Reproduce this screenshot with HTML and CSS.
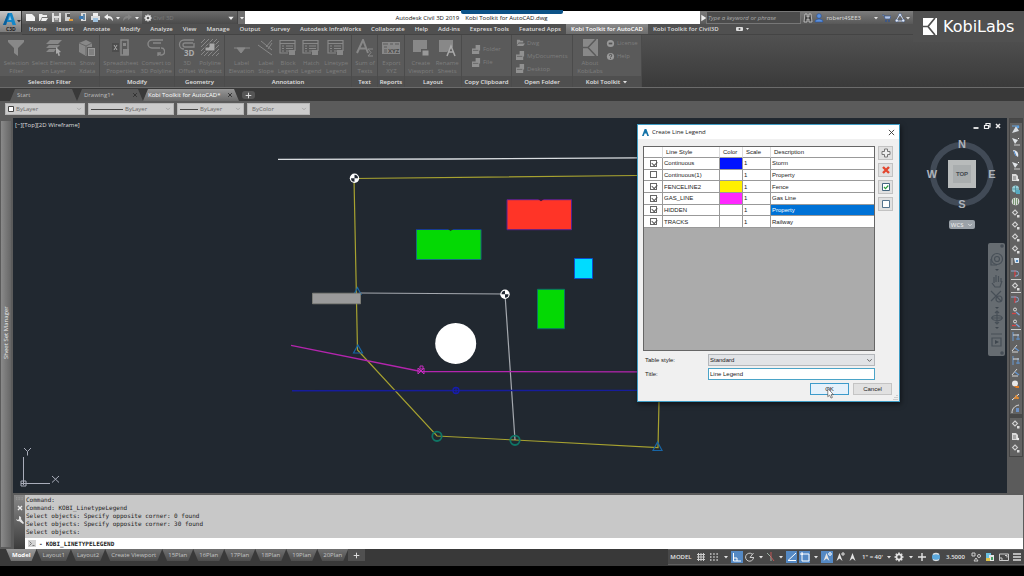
FILE: index.html
```html
<!DOCTYPE html>
<html lang="en">
<head>
<meta charset="utf-8">
<title>Autodesk Civil 3D 2019 - Kobi Toolkit for AutoCAD.dwg</title>
<link rel="stylesheet" href="styles.css">
</head>
<body>
<svg class="defs" aria-hidden="true">
  <symbol id="caret" viewBox="0 0 6 6"><path d="M1 2h4L3 4.500z" fill="currentColor"/></symbol>
  <symbol id="chev" viewBox="0 0 8 8"><path d="M1.500 2.500L4 5l2.500-2.500" fill="none" stroke="currentColor"/></symbol>
  <symbol id="x" viewBox="0 0 8 8"><path d="M1.500 1.500l5 5m0-5l-5 5" fill="none" stroke="currentColor" stroke-width="1.300"/></symbol>
  <symbol id="plus" viewBox="0 0 10 10"><path d="M5 1v8M1 5h8" fill="none" stroke="currentColor" stroke-width="1.400"/></symbol>
  <symbol id="gear" viewBox="0 0 10 10"><circle cx="5" cy="5" r="2.600" fill="none" stroke="currentColor" stroke-width="1.800"/><path d="M5 .5v1.500M5 8v1.500M.5 5H2M8 5h1.500M1.800 1.800l1 1M7.200 7.200l1 1M1.800 8.200l1-1M7.200 2.800l1-1" stroke="currentColor" stroke-width="1.600"/></symbol>
  <symbol id="tb-sel" viewBox="0 0 9 9"><path d="M1 8L5 1l3 5z" fill="#d8dde2"/><path d="M1 1h7" stroke="#67a3dd"/><circle cx="7" cy="2" r="1.300" fill="#5b9fe0"/></symbol>
  <symbol id="tb-flag" viewBox="0 0 9 9"><path d="M1 1l3 6 3-4z" fill="#e0e4e8"/><path d="M3 8h6" stroke="#ccc"/><path d="M7 1l1 1" stroke="#eee"/></symbol>
  <symbol id="tb-shape" viewBox="0 0 9 9"><path d="M2 1c4 0 6 3 5 7L4 6z" fill="#e4e8ee"/><path d="M3 2l2 5" stroke="#4d8ad0"/></symbol>
  <symbol id="tb-page" viewBox="0 0 9 9"><path d="M1 1h4l2 2v5H1z" fill="#dadada"/><path d="M2 4h3M2 6h3" stroke="#777"/><circle cx="7" cy="7" r="1.200" fill="#eee"/></symbol>
  <symbol id="tb-globe" viewBox="0 0 9 9"><circle cx="4.500" cy="4" r="3.500" fill="#9cd0d8"/><path d="M1 4h7M4.500 1v7" stroke="#398191" stroke-width=".7"/><path d="M5 5h4v4H5z" fill="#58a8bf"/></symbol>
  <symbol id="tb-ball" viewBox="0 0 9 9"><circle cx="4.500" cy="4.500" r="3.800" fill="#ddd"/><path d="M4.500 1v7M2.500 1.500v6M6.500 1.500v6" stroke="#6b8d64" stroke-width=".9"/></symbol>
  <symbol id="tb-node" viewBox="0 0 9 9"><path d="M4 1l2.500 2.500L4 6 1.500 3.500z" fill="none" stroke="#d0d0d0" stroke-width="1.100"/><path d="M6 6h2.500v2.500H6z" fill="#ddd"/></symbol>
  <symbol id="tb-tag" viewBox="0 0 9 9"><path d="M1 1v7" stroke="#ccc"/><path d="M3 1h5v5H4z" fill="#dae5ef"/><path d="M5 3h2v2H5z" fill="#4f8dc8"/></symbol>
  <symbol id="tb-red" viewBox="0 0 9 9"><path d="M4 1v7" stroke="#e5383b" stroke-width="1.200"/><path d="M0 2h5a2 2 0 010 5H4" fill="none" stroke="#8ba7ce"/></symbol>
  <symbol id="tb-pair" viewBox="0 0 9 9"><circle cx="4" cy="2.500" r="1.500" fill="none" stroke="#ddd"/><path d="M1 6.500h4" stroke="#d54545" stroke-width="1.300"/><path d="M5 5l3.500 3" stroke="#7fa7d8" stroke-width="1.300"/></symbol>
  <symbol id="tb-dim" viewBox="0 0 9 9"><path d="M2 0v9M7 2v6" stroke="#6b9ad2"/><path d="M2 3h6" stroke="#ddd"/><path d="M5 7h4" stroke="#5d8fc8"/></symbol>
  <symbol id="tb-angle" viewBox="0 0 9 9"><path d="M1 7l5-6M1 8h6" fill="none" stroke="#d6d6d6"/><path d="M4 4l4 3" stroke="#6294d0" stroke-width="1.300"/></symbol>
  <symbol id="tb-orange" viewBox="0 0 9 9"><circle cx="4" cy="3.500" r="3" fill="#e8e8e8"/><path d="M3 6h5v2H5z" fill="#df7c25"/></symbol>
  <symbol id="tb-link" viewBox="0 0 9 9"><path d="M1 8l7-6" stroke="#eee"/><path d="M3 6h5M5 3l2 4" stroke="#e58a2e" stroke-width="1.500"/></symbol>
  <symbol id="tb-curve" viewBox="0 0 9 9"><path d="M1 9C1 5 3 2 8 1" fill="none" stroke="#ddd"/><path d="M5 4h3v4H5z" fill="#6a8fc4"/></symbol>
  <symbol id="legend" viewBox="0 0 18 18"><path d="M1 1.500h15v10.500M1 1v13h8M1 4.500h15M3 7h2m2 0h7M3 9.500h2m2 0h7M3 12h2m2 0h3" fill="none" stroke="currentColor" stroke-width="1.200"/><path d="M10 11h6v5h-6z" fill="currentColor"/></symbol>
  <symbol id="folder" viewBox="0 0 10 10"><path d="M1 2h3l1 1h3v2H3L1 8zM3 6h7L8 9H1z" fill="currentColor"/></symbol>
  <symbol id="docs" viewBox="0 0 10 10"><path d="M4 0h5v6H4zM0 4h5v1h3v5H0z" fill="currentColor"/><path d="M1 6h6" stroke="#5b5b5b" stroke-width=".8"/></symbol>
  <symbol id="ann" viewBox="0 0 10 10"><path d="M4.500 1L1.500 9 4.500 6.500 7.500 9z" fill="currentColor"/></symbol>
</svg>

<div class="app">
<header class="header">
  <button class="appbtn" aria-label="Application menu">
    <svg viewBox="0 0 21 21" width="21" height="21"><path d="M3 14L8 2h4l4 12h-3.500l-1-3H7l-1 3z" fill="#1487c8"/><path d="M8.500 9L10 4.500 11.500 9z" fill="#8ac5e6"/><path d="M3 14L8 2l1 1-3 11z" fill="#0b5f9a"/><path d="M17 9h4l-2 2.500z" fill="#333"/><text x="6" y="20" font-size="5" font-weight="700" fill="#222">C3D</text></svg>
  </button>
  <div class="titlebar">
    <div class="quick">
      <button aria-label="New"><svg viewBox="0 0 9 9"><path d="M0 1h6l3 3v4H0z" fill="#f4f4f4"/></svg></button>
      <button aria-label="Open"><svg viewBox="0 0 9 9"><path d="M0 1h3l1 1h4v2H3L1 8H0zM3 5h6L7 8H2z" fill="#eee"/></svg></button>
      <button aria-label="Save"><svg viewBox="0 0 9 9"><path d="M0 0h9v9H0z" fill="#ddd"/><path d="M2 0h5v3H2zM2 5h5v4H2z" fill="#888"/><path d="M3 6h3" stroke="#eee"/></svg></button>
      <button aria-label="Save as"><svg viewBox="0 0 9 9"><path d="M0 0h5v8H0z" fill="#ccc"/><path d="M2 1h3v3H2z" fill="#555"/><path d="M4 6h4v2H4z" fill="#dd9a3c"/></svg></button>
      <button aria-label="Web open"><svg viewBox="0 0 9 9"><path d="M3 0h5v8H3z" fill="#dcdcdc"/><path d="M1 3h4v3H1z" fill="#3979b5"/><path d="M5 1h2v6H5z" fill="#6387a5"/></svg></button>
      <button aria-label="Plot"><svg viewBox="0 0 9 9"><path d="M2 0h5v3H2z" fill="#eee"/><path d="M0 3h9v4H0z" fill="#ddd"/><path d="M2 5h5v4H2z" fill="#9fc1dd"/></svg></button>
      <button aria-label="Undo"><svg viewBox="0 0 9 9"><path d="M0 4l4-3v2q5 0 5 5Q7 5 4 5v2z" fill="#eee"/></svg></button>
      <button class="tiny" aria-label="Undo list"><svg><use href="#caret"/></svg></button>
      <button class="dim" aria-label="Redo"><svg viewBox="0 0 9 9"><path d="M9 4L5 1v2Q0 3 0 8q2-3 5-3v2z" fill="currentColor"/></svg></button>
      <button class="tiny" aria-label="Redo list"><svg><use href="#caret"/></svg></button>
    </div>
    <label class="workspace"><svg><use href="#gear"/></svg><select aria-label="Workspace"><option>Civil 3D</option></select><svg class="cr"><use href="#caret"/></svg></label>
    <button class="qmore" aria-label="Customize"><svg><use href="#caret"/></svg></button>
    <div class="wintitle"><span>Autodesk Civil 3D 2019</span><span>Kobi Toolkit for AutoCAD.dwg</span></div>
    <div class="infocenter">
      <button class="play" aria-label="Expand"><svg viewBox="0 0 6 6"><path d="M2 1l3 2-3 2z" fill="#eee"/></svg></button>
      <input aria-label="Search" placeholder="Type a keyword or phrase">
      <button aria-label="Find"><svg viewBox="0 0 10 10"><path d="M2 1h2v3h2V1h2l1 8H6V6H4v3H1z" fill="#444" stroke="#ddd" stroke-width=".7"/></svg></button>
      <button class="user"><svg viewBox="0 0 10 10"><circle cx="5" cy="3" r="2.300" fill="#5d91dc" stroke="#214f9b" stroke-width=".6"/><path d="M1 9q0-3 4-3t4 3z" fill="#5d91dc" stroke="#214f9b" stroke-width=".6"/></svg>robert4SEE3<svg class="cr"><use href="#caret"/></svg></button>
      <button aria-label="App store"><svg viewBox="0 0 10 10"><path d="M1 2h2l1 4h5l1-3H3" fill="#b6c6e4" stroke="#35548d" stroke-width=".7"/><circle cx="5" cy="8" r="1" fill="#35548d"/><circle cx="8" cy="8" r="1" fill="#35548d"/></svg></button>
      <button class="net" aria-label="Connect"><svg viewBox="0 0 10 10"><path d="M5 1L1 8h8z" fill="none" stroke="#cfdaf0"/><circle cx="5" cy="2" r="1.500" fill="#e6edf8" stroke="#35548d" stroke-width=".5"/><circle cx="1.800" cy="7.500" r="1.500" fill="#e6edf8" stroke="#35548d" stroke-width=".5"/><circle cx="8.200" cy="7.500" r="1.500" fill="#e6edf8" stroke="#35548d" stroke-width=".5"/></svg><svg class="cr"><use href="#caret"/></svg></button>
    </div>
  </div>
  <nav class="rtabs">
    <a href="#">Home</a><a href="#">Insert</a><a href="#">Annotate</a><a href="#">Modify</a><a href="#">Analyze</a><a href="#">View</a><a href="#">Manage</a><a href="#">Output</a><a href="#">Survey</a><a href="#">Autodesk InfraWorks</a><a href="#">Collaborate</a><a href="#">Help</a><a href="#">Add-ins</a><a href="#">Express Tools</a><a href="#">Featured Apps</a><a href="#" class="on">Kobi Toolkit for AutoCAD</a><a href="#">Kobi Toolkit for Civil3D</a>
    <button class="rmin" aria-label="Minimize ribbon"><svg viewBox="0 0 14 6"><rect x="0" y="1" width="7" height="4" rx="1" fill="#ddd"/><circle cx="3.500" cy="3" r="1" fill="#555"/><path d="M10 2h3l-1.500 2z" fill="#ddd"/></svg></button>
  </nav>
  <div class="strip"></div>
  <div class="brand"><svg viewBox="0 0 14 17"><path d="M0 0h14v17H0z" fill="#fff"/><path d="M0 8.500h5M12 0L5 8.500 12 17" fill="none" stroke="#505050" stroke-width="1.700"/></svg><span>KobiLabs</span></div>
</header>

<section class="ribbon">
  <div class="panel"><div class="tools">
    <button class="tool"><svg viewBox="0 0 18 18"><path d="M1 1h16v2l-6 6v8l-4-3V9L1 3z" fill="currentColor"/></svg>Selection<br>Filter</button>
    <button class="tool"><svg viewBox="0 0 18 18"><path d="M5 1h12l-4 4H1zM4 6h11l-3 3H1zM4 10h7l-2 3H1z" fill="currentColor"/><path d="M11 8l5 5-2 .5 1 3-1.500.5-1-3-1.500 1z" fill="#aaa"/></svg>Select Elements<br>on Layer</button>
    <button class="tool"><svg viewBox="0 0 18 18"><path d="M1 4l7-3 6 3v4H9v8l-1 1-7-4z" fill="currentColor"/><path d="M1 4l7 3 6-3M8 7v9" stroke="#666" fill="none"/><path d="M10 9h7v8h-7z" fill="#999"/><path d="M11 11h5m-5 2h5m-5 2h5" stroke="#666"/></svg>Show<br>Xdata</button>
  </div><h2>Selection Filter</h2></div>
  <div class="panel"><div class="tools">
    <button class="tool"><svg viewBox="0 0 18 18"><path d="M0 4h7v9H0z" fill="#4d4d4d"/><path d="M2 6l3 5m0-5l-3 5" stroke="#aaa"/><path d="M9 1h7v15H9z" fill="none" stroke="currentColor" stroke-width="1.500"/><path d="M11 4h3v3h-3zM11 10h6v6h-6z" fill="currentColor"/></svg>Spreadsheet<br>Properties</button>
    <button class="tool"><svg viewBox="0 0 18 18"><path d="M16 1H5a4 4 0 000 8h8M14 4H6M14 9a3.500 3.500 0 11-3 5m0 3v-3h3" fill="none" stroke="currentColor" stroke-width="1.400"/></svg>Convert to<br>3D Polyline</button>
  </div><h2>Modify</h2></div>
  <div class="panel"><div class="tools">
    <button class="tool"><svg viewBox="0 0 18 18"><path d="M16 1H6a4.500 4.500 0 000 9M15 4H7a2 2 0 000 4h9V4" fill="none" stroke="currentColor" stroke-width="1.300"/><text x="6" y="17" font-size="8" font-weight="700" fill="#aaa">3D</text></svg>3D<br>Offset</button>
    <button class="tool"><svg viewBox="0 0 18 18"><path d="M0 4l4-4M0 8l8-8M0 12L12 0M0 16L16 0M3 17L18 2M7 17L18 6M11 17l7-7M15 17l3-3" stroke="currentColor"/><path d="M4 12V8h4V4h6v8z" fill="#aaa" stroke="#555"/></svg>Polyline<br>Wipeout</button>
  </div><h2>Geometry</h2></div>
  <div class="panel"><div class="tools">
    <button class="tool"><svg viewBox="0 0 18 18"><path d="M1 9h16M4 9l4 5 4-5z" fill="currentColor" stroke="currentColor"/></svg>Label<br>Elevation</button>
    <button class="tool"><svg viewBox="0 0 18 18"><path d="M1 6l14 10M4 2l11 9M15 1l-6 7M15 4l-4 6" stroke="currentColor" fill="none"/></svg>Label<br>Slope</button>
    <button class="tool"><svg><use href="#legend"/></svg>Block<br>Legend</button>
    <button class="tool"><svg><use href="#legend"/></svg>Hatch<br>Legend</button>
    <button class="tool"><svg><use href="#legend"/></svg>Linetype<br>Legend</button>
  </div><h2>Annotation</h2></div>
  <div class="panel"><div class="tools">
    <button class="tool"><svg viewBox="0 0 18 18"><path d="M1 14L7 1l5 13M3 9.500h7" stroke="currentColor" stroke-width="2" fill="none"/><path d="M17 10h-5l3 3.500-3 3.500h5" fill="none" stroke="currentColor"/></svg>Sum of<br>Texts</button>
  </div><h2>Text</h2></div>
  <div class="panel"><div class="tools">
    <button class="tool"><svg viewBox="0 0 18 18"><path d="M0 3h18v12H0z" fill="currentColor"/><path d="M1 5h5m2 0h3m2 0h4M2 8h3M2 11h3M2 13h3" stroke="#5b5b5b"/><text x="6" y="14" font-size="6" font-weight="700" fill="#4a4a4a">XYZ</text></svg>Export<br>XYZ</button>
  </div><h2>Reports</h2></div>
  <div class="panel"><div class="tools">
    <button class="tool"><svg viewBox="0 0 18 18"><path d="M1 1h14v9H9v3H1z" fill="currentColor"/><path d="M10 11h7v6h-7z" fill="#999" stroke="#5b5b5b"/></svg>Create<br>Viewport</button>
    <button class="tool"><svg viewBox="0 0 18 18"><path d="M1 1h14v7l-6 5H1z" fill="currentColor"/><path d="M9 17l4-10 4 10M10.500 13h5" fill="none" stroke="#aaa" stroke-width="1.500"/></svg>Rename<br>Sheets</button>
  </div><h2>Layout</h2></div>
  <div class="panel"><div class="list">
    <button><svg><use href="#docs"/></svg>Folder</button>
    <button><svg><use href="#docs"/></svg>File</button>
  </div><h2>Copy Clipboard</h2></div>
  <div class="panel"><div class="list start">
    <button><svg><use href="#folder"/></svg>Dwg</button>
    <button><svg><use href="#docs"/></svg>MyDocuments</button>
    <button><svg><use href="#docs"/></svg>Desktop</button>
  </div><h2>Open Folder</h2></div>
  <div class="panel"><div class="tools">
    <button class="tool"><svg viewBox="0 0 18 18"><path d="M2 0h15v17H2z" fill="currentColor"/><path d="M2 8.500h5M15 0L7 8.500l8 8.500" stroke="#5b5b5b" stroke-width="1.500" fill="none"/></svg>About<br>KobiLabs</button>
    <div class="list side">
      <button><svg viewBox="0 0 10 10"><circle cx="5" cy="5" r="4" fill="#999"/><path d="M3 4h4v2H3z" fill="#555"/></svg>License</button>
      <button><svg viewBox="0 0 10 10"><circle cx="5" cy="5" r="4" fill="#999"/><path d="M3.800 4q0-1.400 1.300-1.400T6.300 4 5 5.500M5 6.500V7.500" fill="none" stroke="#444"/></svg>Help</button>
    </div>
  </div><h2>Kobi Toolkit <svg class="cr"><use href="#caret"/></svg></h2></div>
</section>

<nav class="doctabs">
  <a href="#" class="d1">Start</a>
  <a href="#" class="d2">Drawing1*<svg><use href="#x"/></svg></a>
  <a href="#" class="d3 on">Kobi Toolkit for AutoCAD*<svg><use href="#x"/></svg></a>
  <button aria-label="New tab"><svg><use href="#plus"/></svg></button>
</nav>

<div class="props">
  <label><svg class="sw" viewBox="0 0 6 6"><path d="M.5.5h5v5h-5z" fill="#fff" stroke="#444"/></svg><select aria-label="Color"><option>ByLayer</option></select><svg class="cr"><use href="#chev"/></svg></label>
  <label><svg class="ln long" viewBox="0 0 32 2" preserveAspectRatio="none"><path d="M0 1.500h32" stroke="#444"/></svg><select aria-label="Linetype"><option>ByLayer</option></select><svg class="cr"><use href="#chev"/></svg></label>
  <label><svg class="ln" viewBox="0 0 18 2" preserveAspectRatio="none"><path d="M0 1.500h18" stroke="#444"/></svg><select aria-label="Lineweight"><option>ByLayer</option></select><svg class="cr"><use href="#chev"/></svg></label>
  <label><select aria-label="Plot style"><option>ByColor</option></select><svg class="cr"><use href="#chev"/></svg></label>
</div>

<main class="work">
  <aside class="palette"><span>Sheet Set Manager</span></aside>
  <div class="right">
    <div class="viewrow">
      <div class="canvas">
        <svg class="drawing" viewBox="13 118 994 375" preserveAspectRatio="xMinYMin slice">
          <path d="M278 159.300L450 159 637 157.800" stroke="#d9dde0" stroke-width="1.300" fill="none"/>
          <g fill="none" stroke="#a7a230" stroke-width="1.200"><path d="M637 175.500L354 178.500 357.500 350 437 436 515 440 658 447.500 659 402"/></g>
          <path d="M360 293l145 1 10 146" fill="none" stroke="#a5a9af" stroke-width="1.200"/>
          <path d="M291 345.300L421 371.500l216 .3" fill="none" stroke="#b425ae" stroke-width="1.300"/>
          <path d="M292 390.700l345-.3" fill="none" stroke="#161c9c" stroke-width="1.400"/>
          <circle cx="456" cy="390.500" r="3" fill="none" stroke="#161cae" stroke-width="1.300"/><path d="M456 387v7" stroke="#161cae"/>
          <path d="M418 374l6-6m-6 0l6 6m-6-6v6m6-6v6M420 366h3v3h-3z" fill="none" stroke="#c52dbd"/>
          <path d="M416.500 229.500h64.500v30h-64.500z" fill="#04d904" stroke="#176c7c"/><path d="M416 229.500h65" stroke="#173b93"/><path d="M448 229h5.500l-3 2z" fill="#203028"/>
          <path d="M507 199.700h64.500v30H507z" fill="#ff3427" stroke="#59208f"/><path d="M538 199h6l-3 2.300z" fill="#3b1840"/>
          <path d="M574.500 258.500h18v20h-18z" fill="#00dcff" stroke="#0a4fd0"/>
          <path d="M537.500 289.300h27v39.400h-27z" fill="#04d904" stroke="#0b7466"/>
          <circle cx="455.700" cy="343.400" r="20.500" fill="#fff"/>
          <g fill="none" stroke="#1765a5" stroke-width="1.200"><path d="M357.500 287.500l3.500 7h-7zM358 345l4.500 8h-9zM657.500 442l4.500 8.500h-9z"/></g>
          <path d="M312.500 293.200h48v10.600h-48z" fill="#9a9a9a" stroke="#81817a" stroke-width=".8"/>
          <g fill="none" stroke="#0f7565" stroke-width="1.800"><circle cx="437" cy="436.300" r="4.700"/><circle cx="515" cy="440.300" r="4.700"/></g>
          <circle cx="354.500" cy="178.300" r="4.700" fill="#fff"/><path d="M354.500 178.300h3.500a3.500 3.500 0 00-3.500-3.500zM354.500 178.300H351a3.500 3.500 0 003.500 3.500z" fill="#222933"/>
          <circle cx="505" cy="294.300" r="4.700" fill="#fff"/><path d="M505 294.300v-3.500a3.500 3.500 0 00-3.500 3.500zM505 294.300v3.500a3.500 3.500 0 003.500-3.500z" fill="#222933"/>
          <path d="M23.500 457v28M21 483.500h29M21 481h5v5h-5zM24 448l3.500 3.500L31 448M27.500 451.500v4M52 476l7 6.500M59 476l-7 6.500" fill="none" stroke="#a9adba"/>
        </svg>
        <div class="vplabel">[−][Top][2D Wireframe]</div>
        <div class="winctl">
          <button aria-label="Minimize"><svg viewBox="0 0 8 8"><path d="M1.500 6h5" stroke="#eee" stroke-width="1.800"/></svg></button>
          <button aria-label="Restore"><svg viewBox="0 0 8 8"><path d="M3 3V1.500h4V5H5.500M1.500 3.500h4v3h-4z" fill="none" stroke="#eee" stroke-width="1.200"/></svg></button>
          <button aria-label="Close"><svg viewBox="0 0 8 8"><path d="M2 2l4 4m0-4L2 6" stroke="#eee" stroke-width="1.500"/></svg></button>
        </div>
        <div class="cube">
          <svg viewBox="0 0 72 72"><circle cx="36" cy="36" r="29" fill="none" stroke="#414a56" stroke-width="6"/><path d="M22 22h28v28H22z" fill="#b8bbbb"/><path d="M27 27h18v18H27z" fill="#a9adae"/><g fill="#adb3ba" font-weight="700" font-size="11" text-anchor="middle"><text x="36" y="10">N</text><text x="36" y="70">S</text><text x="6" y="40">W</text><text x="66" y="40">E</text></g><text x="36" y="38" font-size="6" font-weight="700" text-anchor="middle" fill="#444a50">TOP</text></svg>
          <button class="wcs">WCS<svg class="cr"><use href="#chev"/></svg></button>
        </div>
        <div class="navbar">
          <svg viewBox="0 0 17 113"><g fill="none" stroke="#474f57" stroke-width="1.200"><circle cx="9" cy="16" r="5.500"/><circle cx="9" cy="16" r="2.500"/><path d="M3 16v6h6M4 40l3 4h5l2-6M6 40v-6M8 39v-7M10.500 39v-6M13 39v-4M3 48l10 10M13 48L3 58"/><circle cx="11" cy="56" r="3"/><path d="M9 68v13M3 75h12M7 70l2-2 2 2M7 79l2 2 2-2"/><ellipse cx="9" cy="75" rx="5" ry="2.500"/><path d="M3 91h11M4 95h9v8H4z"/></g><path d="M7 97l4 2-4 2zM7 26h4l-2 2zM7 64h4l-2 2zM7 84h4l-2 2z" fill="#3e464e"/><circle cx="14" cy="3" r="1.800" fill="#464e56"/><circle cx="14" cy="110" r="1.800" fill="#464e56"/></svg>
        </div>

        <form class="dialog" role="dialog" aria-label="Create Line Legend">
          <div class="dtitle"><svg viewBox="0 0 8 8"><path d="M0 8L3 0h2l3 8H6L5 5H3L2 8z" fill="#1473a8"/></svg><span>Create Line Legend</span><button type="button" aria-label="Close"><svg viewBox="0 0 8 8"><path d="M1 1l6 6m0-6L1 7" stroke="#333"/></svg></button></div>
          <div class="dbody">
            <div class="gridbox">
              <table>
                <colgroup><col class="c1"><col class="c2"><col class="c3"><col class="c4"><col></colgroup>
                <thead><tr><th></th><th>Line Style</th><th>Color</th><th>Scale</th><th>Description</th></tr></thead>
                <tbody>
                  <tr><td><input type="checkbox" aria-label="Continuous" checked></td><td>Continuous</td><td class="blue"></td><td>1</td><td>Storm</td></tr>
                  <tr><td><input type="checkbox" aria-label="Continuous(1)"></td><td>Continuous(1)</td><td></td><td>1</td><td>Property</td></tr>
                  <tr><td><input type="checkbox" aria-label="FENCELINE2" checked></td><td>FENCELINE2</td><td class="yellow"></td><td>1</td><td>Fence</td></tr>
                  <tr><td><input type="checkbox" aria-label="GAS_LINE" checked></td><td>GAS_LINE</td><td class="pink"></td><td>1</td><td>Gas Line</td></tr>
                  <tr><td><input type="checkbox" aria-label="HIDDEN" checked></td><td>HIDDEN</td><td></td><td>1</td><td class="sel">Property</td></tr>
                  <tr><td><input type="checkbox" aria-label="TRACKS" checked></td><td>TRACKS</td><td></td><td>1</td><td>Railway</td></tr>
                </tbody>
              </table>
            </div>
            <div class="dside">
              <button type="button" aria-label="Add"><svg viewBox="0 0 10 10"><path d="M3.500 1h3v2.500H9v3H6.500V9h-3V6.500H1v-3h2.500z" fill="#eee" stroke="#777"/></svg></button>
              <button type="button" aria-label="Remove"><svg viewBox="0 0 10 10"><path d="M2 2l6 6m0-6L2 8" stroke="#e3472f" stroke-width="2.400"/></svg></button>
              <button type="button" aria-label="Check all"><svg viewBox="0 0 10 10"><path d="M1.500 1.500h7v7h-7z" fill="#fff" stroke="#44657e"/><path d="M3 5l1.500 1.700L7.300 3.500" fill="none" stroke="#2f9d3f" stroke-width="1.200"/></svg></button>
              <button type="button" aria-label="Uncheck all"><svg viewBox="0 0 10 10"><path d="M1.500 1.500h7v7h-7z" fill="#fff" stroke="#55758f"/></svg></button>
            </div>
            <div class="field"><label for="ts">Table style:</label><span class="sel-wrap"><select id="ts"><option>Standard</option></select><svg><use href="#chev"/></svg></span></div>
            <div class="field"><label for="ti">Title:</label><input id="ti" type="text" value="Line Legend"></div>
            <div class="dbtns"><button type="button" class="ok">OK</button><button type="button">Cancel</button></div>
          </div>
          <svg class="cursor" viewBox="0 0 8 12"><path d="M.5.5v9l2-1.800 1.500 3.300 1.500-.7L4.200 7.200h2.500z" fill="#fff" stroke="#444" stroke-width=".7"/></svg>
          <svg class="grip" viewBox="0 0 5 5"><path d="M4 0v1M4 2v1M4 4v1M2 2v1M2 4v1M0 4v1" stroke="#aaa"/></svg>
        </form>
      </div>
      <aside class="toolbar">
        <div class="tbin">
          <i></i>
          <button aria-label="Select"><svg><use href="#tb-sel"/></svg></button><button aria-label="Flag"><svg><use href="#tb-flag"/></svg></button><button aria-label="Shape"><svg><use href="#tb-shape"/></svg></button><button aria-label="Marker"><svg><use href="#tb-flag"/></svg></button><button aria-label="Page"><svg><use href="#tb-page"/></svg></button><button aria-label="Globe"><svg><use href="#tb-globe"/></svg></button><button aria-label="Ball"><svg><use href="#tb-ball"/></svg></button><button aria-label="Node"><svg><use href="#tb-node"/></svg></button><button aria-label="Node text"><svg><use href="#tb-node"/></svg></button><button aria-label="Node move"><svg><use href="#tb-node"/></svg></button><button aria-label="Node lock"><svg><use href="#tb-node"/></svg></button><button aria-label="Tag"><svg><use href="#tb-tag"/></svg></button><button aria-label="Join"><svg><use href="#tb-red"/></svg></button>
          <hr><button aria-label="Nodes"><svg><use href="#tb-node"/></svg></button>
          <hr><button aria-label="Trim"><svg><use href="#tb-red"/></svg></button><button aria-label="Pair"><svg><use href="#tb-pair"/></svg></button><button aria-label="Pair point"><svg><use href="#tb-pair"/></svg></button>
          <hr><button aria-label="Dimension"><svg><use href="#tb-dim"/></svg></button><button aria-label="Angle"><svg><use href="#tb-angle"/></svg></button><button aria-label="Distance"><svg><use href="#tb-dim"/></svg></button><button aria-label="Slope"><svg><use href="#tb-angle"/></svg></button><button aria-label="Render"><svg><use href="#tb-orange"/></svg></button><button aria-label="Link"><svg><use href="#tb-link"/></svg></button><button aria-label="Curve"><svg><use href="#tb-curve"/></svg></button>
          <i></i>
          <button aria-label="Vertex"><svg><use href="#tb-node"/></svg></button><button aria-label="Sheet"><svg><use href="#tb-page"/></svg></button><button aria-label="Vertex edit"><svg><use href="#tb-node"/></svg></button>
        </div>
      </aside>
    </div>
    <section class="command">
      <div class="handle">
        <svg viewBox="0 0 10 4"><path d="M0 1h10M0 3h10" stroke="#aaa" stroke-dasharray="1 1"/></svg>
        <button aria-label="Close command line"><svg viewBox="0 0 8 8"><path d="M2 2l4 4m0-4L2 6" stroke="#eee" stroke-width="1.400"/></svg></button>
        <button aria-label="Customize command line"><svg viewBox="0 0 8 8"><path d="M1 1l2 2M3 0q3 1 2 3l3 4-1 1-4-3Q1 6 0 3l2 1 1-1z" fill="#e4e4e4"/></svg></button>
      </div>
      <div class="cmdmain">
        <pre class="history">Command:
Command: KOBI_LinetypeLegend
Select objects: Specify opposite corner: 0 found
Select objects: Specify opposite corner: 30 found
Select objects:</pre>
        <label class="prompt"><svg viewBox="0 0 8 7"><path d="M0 0h8v7H0z" fill="#d4d4d4"/><path d="M1.500 1.500l2 2-2 2M4.500 5.500h2" fill="none" stroke="#777"/></svg><span>-</span><input aria-label="Command" value="KOBI_LINETYPELEGEND"></label>
      </div>
    </section>
  </div>
</main>

<footer class="bottom">
  <nav class="ltabs"><a href="#" class="on">Model</a><a href="#">Layout1</a><a href="#">Layout2</a><a href="#">Create Viewport</a><a href="#">15Plan</a><a href="#">16Plan</a><a href="#">17Plan</a><a href="#">18Plan</a><a href="#">19Plan</a><a href="#">20Plan</a><button aria-label="New layout"><svg><use href="#plus"/></svg></button></nav>
  <div class="status">
    <button class="t">MODEL</button>
    <button aria-label="Grid"><svg viewBox="0 0 10 10"><path d="M2.500 1v8M5 1v8M7.500 1v8M1 2.500h8M1 5h8M1 7.500h8" stroke="#ccc"/></svg></button>
    <button aria-label="Snap"><svg viewBox="0 0 10 10"><path d="M1 2h8M1 5h8M1 8h8" stroke="#ccc" stroke-width="1.300" stroke-dasharray="1.500 1.700"/></svg></button>
    <button aria-label="Snap menu"><svg class="cr"><use href="#caret"/></svg></button>
    <button class="act" aria-label="Ortho"><svg viewBox="0 0 10 10"><path d="M1.500 1v8H9M1.500 6H5v3" fill="none" stroke="#fff"/></svg></button>
    <button aria-label="Polar"><svg viewBox="0 0 10 10"><path d="M7 2a4 4 0 101.500 4M5 5.500h4M5 5.500L8.500 1" fill="none" stroke="#ccc"/></svg></button>
    <button aria-label="Polar menu"><svg class="cr"><use href="#caret"/></svg></button>
    <button aria-label="Isodraft"><svg viewBox="0 0 10 10"><path d="M1 1l4 4v4" stroke="#9cb0a4" fill="none"/><path d="M5 0v5l3 4" stroke="#c25555" fill="none"/></svg></button>
    <button aria-label="Isodraft menu"><svg class="cr"><use href="#caret"/></svg></button>
    <button class="act" aria-label="Tracking"><svg viewBox="0 0 10 10"><path d="M9 1L1 8.500h8" fill="none" stroke="#fff"/></svg></button>
    <button class="act" aria-label="Object snap"><svg viewBox="0 0 10 10"><path d="M2 2h7v7H2zM0 2h3M2 0v3" fill="none" stroke="#fff"/></svg></button>
    <button aria-label="Snap options"><svg class="cr"><use href="#caret"/></svg></button>
    <button class="act" aria-label="Annotation visibility"><svg viewBox="0 0 10 10"><use href="#ann"/><circle cx="8" cy="2" r="1.300" fill="none" stroke="#fff"/></svg></button>
    <button aria-label="Auto scale"><svg viewBox="0 0 10 10"><use href="#ann"/><path d="M8 0v4M6 2h4" stroke="#ddd"/></svg></button>
    <button aria-label="Annotation scale"><svg><use href="#ann"/></svg></button>
    <button class="t">1" = 40'</button>
    <button aria-label="Scale menu"><svg class="cr"><use href="#caret"/></svg></button>
    <button aria-label="Workspace"><svg><use href="#gear"/></svg></button>
    <button aria-label="Workspace menu"><svg class="cr"><use href="#caret"/></svg></button>
    <button aria-label="Monitor"><svg><use href="#plus"/></svg></button>
    <button aria-label="Elevation"><svg viewBox="0 0 10 10"><circle cx="5" cy="5" r="4" fill="#5ba8dc"/><path d="M2 2.500q3-2 6 0M2 7.500q3 2 6 0" stroke="#ddd" stroke-width="1.400" fill="none"/></svg></button>
    <button class="t">3.5000</button>
    <button aria-label="Isolate"><svg viewBox="0 0 10 10"><path d="M1 1h3v3H1zM5 6l2 3H3z" fill="none" stroke="#ccc"/><circle cx="8" cy="4" r="1.500" fill="none" stroke="#ccc"/></svg></button>
    <button aria-label="Hardware"><svg viewBox="0 0 10 10"><path d="M1 1h5v5H1z" fill="#6ac0e0"/><path d="M4 3h5v6H4z" fill="#e6e6e6"/><path d="M1 6h4v3H1z" fill="#dcc24d"/><path d="M6 5h2v3H6z" fill="#48a065"/></svg></button>
    <button aria-label="Clean screen"><svg viewBox="0 0 10 10"><path d="M.5 2h9v6.500h-9zM6 3.500h2v2M4 7H2V5" fill="none" stroke="#ccc"/></svg></button>
    <button aria-label="Menu"><svg viewBox="0 0 10 10"><path d="M1 2h8M1 5h8M1 8h8" stroke="#ddd" stroke-width="1.300"/></svg></button>
  </div>
</footer>
</div>
</body>
</html>
```

FILE: styles.css
```css
* { box-sizing: border-box; }
body { margin: 0; background: #000; font: 6px/8px "Open Sans", "Noto Sans", sans-serif; color: #ddd; }
button, input, select { font: inherit; color: inherit; margin: 0; padding: 0; border: 0; background: none; border-radius: 0; min-width: 0; }
button { display: flex; align-items: center; justify-content: center; }
select { appearance: none; }
a { color: inherit; text-decoration: none; }
svg { display: block; flex: none; width: 10px; height: 10px; }
svg.cr { width: 6px; height: 6px; }
.defs { position: absolute; width: 0; height: 0; }
.app { min-height: 100vh; display: flex; flex-direction: column; padding: 11px 0 10px; }

.header { position: relative; display: grid; grid-template: 13px 11px / 22px 1fr; background: #4f4f4f; }
.appbtn { grid-row: span 2; align-self: start; height: 21px; background: linear-gradient(#c4c4c4, #7c7c7c); border-right: 1px solid #333; justify-content: flex-start; }
.appbtn svg { width: 21px; height: 21px; }
.titlebar { display: flex; min-width: 0; background: linear-gradient(#8a8a8a, #555); }
.quick { display: grid; grid-template-columns: repeat(7, 13px) 6px 12px 8px; padding-left: 2px; }
.quick svg { width: 9px; height: 9px; }
.quick .tiny svg, .qmore svg { width: 6px; height: 6px; color: #eee; }
.quick .dim { color: #858585; }
.workspace { display: flex; align-items: center; width: 95px; margin-left: 1px; padding: 0 2px; gap: 1px; background: linear-gradient(#6a6a6a, #4a4a4a); }
.workspace svg { width: 8px; height: 8px; color: #eee; }
.workspace select { flex: 1; color: #7c7c7c; }
.qmore { width: 8px; background: #6f6f6f; border-left: 1px solid #444; }
.wintitle { flex: 1; min-width: 0; background: #fff; color: #111; display: flex; justify-content: center; align-items: center; gap: 6px; padding-right: 2px; white-space: nowrap; }
.infocenter { width: 324px; padding-right: 111px; display: flex; background: linear-gradient(#7c7c7c, #585858); }
.infocenter .play { width: 6px; }
.infocenter input { width: 96px; background: #4c4c4c; border: 1px solid #777; padding-left: 1px; font-style: italic; }
.infocenter input::placeholder { color: #aaa; opacity: 1; }
.infocenter button { width: 14px; }
.infocenter .play { width: 6px; }
.infocenter .user { width: 66px; justify-content: flex-start; gap: 2px; }
.infocenter .user .cr { margin-left: auto; }
.infocenter .net { width: 20px; }
.rtabs { display: flex; align-items: stretch; padding-left: 2px; white-space: nowrap; background: #505050; border-bottom: 1px solid #444; color: #dcdcdc; line-height: 10px; font-weight: 600; }
.rtabs a { padding: 0 5px; }
.rtabs .on { background: linear-gradient(#8a8a8a, #6c6c6c); color: #fff; }
.rmin { padding-left: 12px; }
.rmin svg { width: 14px; height: 6px; }
.strip { position: absolute; left: 461px; top: -1px; width: 102px; height: 4px; background: #0d5388; border-radius: 0 0 2px 2px; }
.brand { position: absolute; right: 0; top: 0; width: 111px; height: 31px; background: #505050; display: flex; align-items: center; gap: 6px; padding-left: 10px; color: #fff; font: 16px/31px "DejaVu Sans", sans-serif; }
.brand svg { width: 14px; height: 17px; }

.ribbon { display: grid; grid-template-columns: 100px 75px 50px 127px 26px 27px 57px 50px 61px 69px 1fr; height: 53px; background: linear-gradient(#515151, #3a3a3a); border-bottom: 1px solid #6b6b6b; }
.panel { display: flex; flex-direction: column; background: #5a5a5a; border-right: 1px solid #4b4b4b; color: #7e7e7e; min-width: 0; }
.panel h2 { margin: 0; height: 11px; font-size: 6px; line-height: 10px; font-weight: 600; color: #e0e0e0; background: #4f4f4f; display: flex; justify-content: center; align-items: center; gap: 2px; white-space: nowrap; }
.tools { flex: 1; display: flex; justify-content: space-evenly; align-items: stretch; padding: 2px 0 0 1px; }
.tool { display: block; white-space: nowrap; text-align: center; }
.tool svg { width: 18px; height: 18px; margin: 0 auto 2px; color: #888; }
.list { flex: 1; display: flex; flex-direction: column; justify-content: center; gap: 3px; padding-left: 10px; }
.list.start { padding-left: 4px; }
.list.side { flex: none; justify-content: flex-start; padding: 1px 0 0; }
.list button { justify-content: flex-start; gap: 2px; height: 10px; }
.list svg { width: 9px; height: 9px; color: #919191; }

.doctabs { display: flex; height: 13px; padding: 1px 0 0 10px; background: #393939; }
.doctabs a { display: flex; align-items: center; justify-content: space-between; white-space: nowrap; padding: 0 5px 0 7px; background: #585858; color: #bbb; clip-path: polygon(5px 0, calc(100% - 5px) 0, 100% 100%, 0 100%); }
.doctabs svg { width: 6px; height: 6px; color: #333; }
.d1 { width: 67px; }
.d2 { width: 66px; }
.doctabs .on { width: 96px; background: linear-gradient(#969696, #6a6a6a); color: #fff; padding: 0 6px 0 5px; }
.doctabs button { width: 13px; margin: 2px 3px; background: #555; border-radius: 3px; }
.doctabs button svg { width: 7px; height: 7px; color: #ddd; }

.props { display: grid; grid-template-columns: 80px 86px 67px 63px; gap: 3px; height: 17px; padding: 2px 5px; background: #5b5b5b; }
.props label { display: flex; align-items: center; gap: 2px; height: 12px; padding: 0 2px; background: #cbcbcb; color: #666; border: 1px solid #b5b5b5; }
.props select { flex: 1; padding-left: 0; }
.props .sw { width: 6px; height: 6px; }
.props .ln { width: 18px; height: 2px; }
.props .long { width: 32px; }
.props .cr { color: #999; }
.props label:last-child { padding-left: 4px; }

.work { flex: 1; display: flex; background: #5b5b5b; }
.palette { display: flex; width: 13px; padding: 3px 2px 2px 1px; }
.palette span { flex: 1; writing-mode: vertical-rl; transform: rotate(180deg); background: linear-gradient(90deg, #666, #8a8a8a); display: flex; align-items: center; padding-top: 188px; color: #eee; line-height: 10px; }
.right { flex: 1; min-width: 0; display: flex; flex-direction: column; }
.viewrow { flex: 1; display: flex; }
.canvas { flex: 1; position: relative; background: #212830; overflow: hidden; }
.drawing { position: absolute; inset: 0; width: 100%; height: 100%; }
.vplabel { position: relative; padding: 3px 2px; color: #ddd; }
.winctl { position: absolute; right: 4px; top: 3px; display: flex; gap: 1px; }
.winctl button { width: 10px; height: 10px; }
.winctl svg { width: 8px; height: 8px; }
.cube { position: absolute; right: 8px; top: 20px; width: 74px; display: flex; flex-direction: column; align-items: center; gap: 10px; }
.cube > svg { width: 72px; height: 72px; overflow: visible; font-family: "Liberation Sans", Arial, sans-serif; }
.wcs { width: 26px; height: 9px; background: #9ba2a9; border-radius: 2px; color: #f0f0f0; justify-content: space-around; }
.navbar { position: absolute; right: 2px; top: 125px; background: #666c71; border-radius: 2px; }
.navbar svg { width: 17px; height: 113px; }

.toolbar { width: 17px; background: #5b5b5b; padding: 0 1px 0 2px; }
.tbin { display: flex; flex-direction: column; border: 1px solid #464646; background: #626262; padding-bottom: 2px; }
.tbin i { height: 4px; background: #484848; }
.tbin button { height: 12px; justify-content: flex-start; padding-left: 1px; }
.tbin svg { width: 9px; height: 9px; }
.tbin hr { width: 10px; height: 1px; margin: 0 1px; border: 0; background: #ccc; }

.dialog { position: absolute; left: 624px; top: 6px; width: 263px; background: #f0f0f0; border: 1px solid #3f9cc4; color: #222; font: 6px/8px "Liberation Sans", Arial, sans-serif; box-shadow: 1px 2px 5px #0008; }
.dtitle { height: 14px; display: flex; align-items: center; gap: 3px; padding: 0 4px; background: #fff; font-family: "Open Sans", "Noto Sans", sans-serif; }
.dtitle button { margin-left: auto; }
.dtitle svg { width: 7px; height: 7px; }
.dbody { display: grid; grid-template-columns: 232px 15px; column-gap: 3px; padding: 7px 5px 6px; row-gap: 2px; }
.gridbox { height: 205px; background: #ababab; border: 1px solid #666; margin-bottom: 1px; }
table { width: 100%; height: 81px; table-layout: fixed; border-collapse: separate; border-spacing: 0; background: #fff; }
.c1 { width: 19px; }
.c2 { width: 57px; }
.c3 { width: 23px; }
.c4 { width: 28px; }
th, td { height: 11px; padding: 0 1px; border: 0 solid #999; border-width: 0 1px 1px 0; line-height: 8px; text-align: left; font-weight: 400; white-space: nowrap; }
th { padding: 0 3px; border-right-color: #ddd; }
th:last-child, td:last-child { border-right: 0; }
td input { appearance: none; display: block; position: relative; width: 7px; height: 7px; margin: 0 auto; border: 1px solid #666; background: #fff; }
td input:checked::after { content: ""; position: absolute; left: 1px; top: 0; width: 4px; height: 3px; border: solid #555; border-width: 0 0 1px 1px; transform: rotate(-45deg); }
.blue { background: #0012ff; }
.yellow { background: #fff000; }
.pink { background: #ff28ff; }
td.sel { background: #0072d6; color: #fff; }
.dside { display: flex; flex-direction: column; gap: 3px; }
.dside button { height: 14px; background: #e1e1e1; border: 1px solid #c2c2c2; }
.field { grid-column: 1; display: grid; grid-template-columns: 65px 1fr; align-items: center; height: 12px; }
.field label { padding-left: 2px; }
.field input { height: 12px; padding: 0 1px; background: #fff; border: 1px solid #4ba4c8; }
.sel-wrap { display: flex; align-items: center; height: 12px; background: #e1e3e6; border: 1px solid #b4b7bb; padding-right: 1px; }
.sel-wrap select { flex: 1; padding-left: 1px; }
.sel-wrap svg { width: 7px; height: 7px; color: #555; }
.dbtns { grid-column: 1 / -1; display: flex; justify-content: flex-end; gap: 4px; padding: 1px 1px 0 0; }
.dbtns button { width: 39px; height: 12px; background: #e1e1e1; border: 1px solid #c4c4c4; }
.dbtns .ok { background: #e5f1fb; border-color: #3d9bcb; }
.cursor { position: absolute; left: 189px; top: 263px; width: 8px; height: 11px; }
.grip { position: absolute; right: 1px; bottom: 1px; width: 5px; height: 5px; }

.command { display: flex; height: 56px; margin-left: 1px; padding: 2px 1px 0 0; }
.handle { width: 11px; display: flex; flex-direction: column; align-items: center; gap: 4px; padding-top: 2px; background: linear-gradient(#888, #3c3c3c); }
.handle svg { width: 8px; height: 8px; }
.handle > svg { height: 3px; }
.cmdmain { flex: 1; display: flex; flex-direction: column; background: #c8c8c8; color: #222; font-family: "DejaVu Sans Mono", "Liberation Mono", monospace; }
.history { flex: 1; margin: 0; padding: 1px; font: inherit; }
.prompt { display: flex; align-items: center; gap: 3px; height: 11px; padding-left: 3px; background: #fff; font-weight: 700; }
.prompt svg { width: 8px; height: 7px; }
.prompt input { flex: 1; }

.bottom { display: flex; justify-content: space-between; height: 17px; background: #393939; }
.ltabs { display: flex; height: 12px; padding-left: 6px; white-space: nowrap; line-height: 12px; color: #c4c4c4; }
.ltabs a { padding: 0 6px; background: linear-gradient(#707070, #4d4d4d); clip-path: polygon(0 0, 100% 0, calc(100% - 5px) 100%, 5px 100%); }
.ltabs .on { background: linear-gradient(#999, #707070); color: #fff; font-weight: 700; }
.ltabs button { padding: 0 5px; background: #505050; color: #ddd; }
.ltabs button svg { width: 7px; height: 7px; }
.status { display: grid; grid-template-columns: 26px 13px 14px 9px 14px 12px 9px 12px 8px 13px 13px 9px 14px 12px 14px 25px 7px 14px 9px 13px 15px 25px 15px 14px 13px 14px; height: 16px; border: solid #606060; border-width: 1px 0; background: #484848; color: #eee; }
.status button { white-space: nowrap; color: #e4e4e4; }
.status .t { font-weight: 600; }
.status .act { background: #5489c4; margin: 1px; }
```
